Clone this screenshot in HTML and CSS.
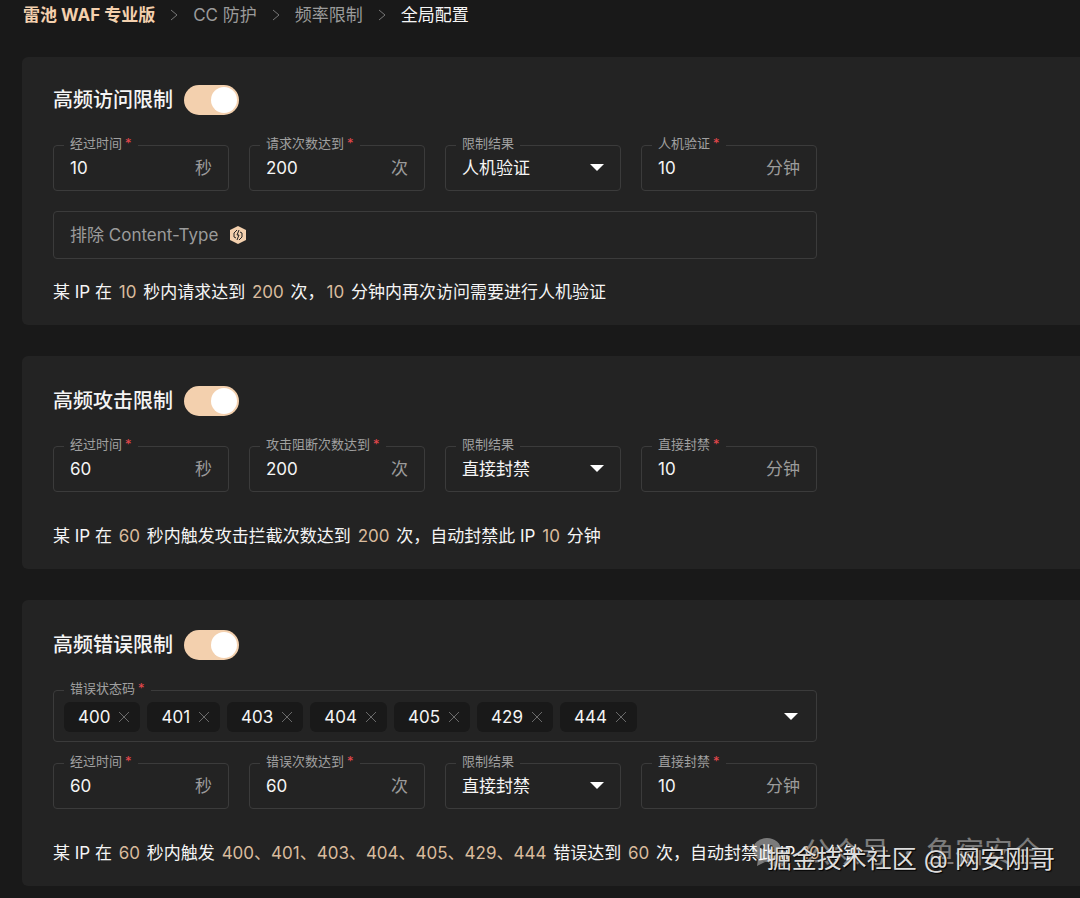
FILE: index.html
```html
<!DOCTYPE html>
<html lang="zh-CN">
<head>
    <meta charset="UTF-8">
    <meta name="viewport" content="width=device-width, initial-scale=1.0">
    <title>全局配置</title>
    <link rel="stylesheet" href="styles.css">
</head>
<body>
    <nav class="breadcrumb">
        <a href="#" class="brand">雷池 WAF 专业版</a>
        <svg class="sep" viewBox="0 0 8 12"><path d="M1 1l6 5-6 5"/></svg>
        <a href="#">CC 防护</a>
        <svg class="sep" viewBox="0 0 8 12"><path d="M1 1l6 5-6 5"/></svg>
        <a href="#">频率限制</a>
        <svg class="sep" viewBox="0 0 8 12"><path d="M1 1l6 5-6 5"/></svg>
        <a href="#" class="current">全局配置</a>
    </nav>

    <main class="cards">
        <section class="card">
            <div class="card-title">
                <h2><label for="visitOn">高频访问限制</label></h2>
                <input type="checkbox" class="switch" id="visitOn" checked>
            </div>
            <div class="fields">
                <fieldset class="field">
                    <legend><label for="visitTime">经过时间<i>*</i></label></legend>
                    <input type="text" id="visitTime" value="10">
                    <span class="unit">秒</span>
                </fieldset>
                <fieldset class="field">
                    <legend><label for="visitCount">请求次数达到<i>*</i></label></legend>
                    <input type="text" id="visitCount" value="200">
                    <span class="unit">次</span>
                </fieldset>
                <fieldset class="field">
                    <legend><label for="visitResult">限制结果</label></legend>
                    <select id="visitResult">
                        <option selected>人机验证</option>
                    </select>
                    <svg class="arrow" viewBox="0 0 14 8"><path d="M0 0h14L7 7z"/></svg>
                </fieldset>
                <fieldset class="field">
                    <legend><label for="visitBan">人机验证<i>*</i></label></legend>
                    <input type="text" id="visitBan" value="10">
                    <span class="unit">分钟</span>
                </fieldset>
                <div class="field wide plain">
                    <label for="contentType">排除 Content-Type</label>
                    <svg class="pro" viewBox="0 0 18 18"><path class="hex" d="M9 0l8 4v10l-8 4-8-4V4z"/><path class="bolt" d="M8 4L5 7v4l2 1M10 4L8 9h2l-2 5M11 6l2 1v4l-3 3"/></svg>
                    <input type="text" id="contentType">
                </div>
            </div>
            <p class="summary">某 IP 在 <b>10</b> 秒内请求达到 <b>200</b> 次，<b>10</b> 分钟内再次访问需要进行人机验证</p>
        </section>

        <section class="card">
            <div class="card-title">
                <h2><label for="attackOn">高频攻击限制</label></h2>
                <input type="checkbox" class="switch" id="attackOn" checked>
            </div>
            <div class="fields">
                <fieldset class="field">
                    <legend><label for="attackTime">经过时间<i>*</i></label></legend>
                    <input type="text" id="attackTime" value="60">
                    <span class="unit">秒</span>
                </fieldset>
                <fieldset class="field">
                    <legend><label for="attackCount">攻击阻断次数达到<i>*</i></label></legend>
                    <input type="text" id="attackCount" value="200">
                    <span class="unit">次</span>
                </fieldset>
                <fieldset class="field">
                    <legend><label for="attackResult">限制结果</label></legend>
                    <select id="attackResult">
                        <option selected>直接封禁</option>
                    </select>
                    <svg class="arrow" viewBox="0 0 14 8"><path d="M0 0h14L7 7z"/></svg>
                </fieldset>
                <fieldset class="field">
                    <legend><label for="attackBan">直接封禁<i>*</i></label></legend>
                    <input type="text" id="attackBan" value="10">
                    <span class="unit">分钟</span>
                </fieldset>
            </div>
            <p class="summary spaced">某 IP 在 <b>60</b> 秒内触发攻击拦截次数达到 <b>200</b> 次，自动封禁此 IP <b>10</b> 分钟</p>
        </section>

        <section class="card">
            <div class="card-title">
                <h2><label for="errorOn">高频错误限制</label></h2>
                <input type="checkbox" class="switch" id="errorOn" checked>
            </div>
            <div class="fields">
                <fieldset class="field wide tags">
                    <legend>错误状态码<i>*</i></legend>
                    <span class="tag">400<button type="button" aria-label="400"><svg viewBox="0 0 10 10"><path d="M0 0l10 10M10 0L0 10"/></svg></button></span>
                    <span class="tag">401<button type="button" aria-label="401"><svg viewBox="0 0 10 10"><path d="M0 0l10 10M10 0L0 10"/></svg></button></span>
                    <span class="tag">403<button type="button" aria-label="403"><svg viewBox="0 0 10 10"><path d="M0 0l10 10M10 0L0 10"/></svg></button></span>
                    <span class="tag">404<button type="button" aria-label="404"><svg viewBox="0 0 10 10"><path d="M0 0l10 10M10 0L0 10"/></svg></button></span>
                    <span class="tag">405<button type="button" aria-label="405"><svg viewBox="0 0 10 10"><path d="M0 0l10 10M10 0L0 10"/></svg></button></span>
                    <span class="tag">429<button type="button" aria-label="429"><svg viewBox="0 0 10 10"><path d="M0 0l10 10M10 0L0 10"/></svg></button></span>
                    <span class="tag">444<button type="button" aria-label="444"><svg viewBox="0 0 10 10"><path d="M0 0l10 10M10 0L0 10"/></svg></button></span>
                    <button type="button" class="open" aria-label="错误状态码"><svg class="arrow" viewBox="0 0 14 8"><path d="M0 0h14L7 7z"/></svg></button>
                </fieldset>
                <fieldset class="field">
                    <legend><label for="errorTime">经过时间<i>*</i></label></legend>
                    <input type="text" id="errorTime" value="60">
                    <span class="unit">秒</span>
                </fieldset>
                <fieldset class="field">
                    <legend><label for="errorCount">错误次数达到<i>*</i></label></legend>
                    <input type="text" id="errorCount" value="60">
                    <span class="unit">次</span>
                </fieldset>
                <fieldset class="field">
                    <legend><label for="errorResult">限制结果</label></legend>
                    <select id="errorResult">
                        <option selected>直接封禁</option>
                    </select>
                    <svg class="arrow" viewBox="0 0 14 8"><path d="M0 0h14L7 7z"/></svg>
                </fieldset>
                <fieldset class="field">
                    <legend><label for="errorBan">直接封禁<i>*</i></label></legend>
                    <input type="text" id="errorBan" value="10">
                    <span class="unit">分钟</span>
                </fieldset>
            </div>
            <p class="summary spaced">某 IP 在 <b>60</b> 秒内触发 <b>400、401、403、404、405、429、444</b> 错误达到 <b>60</b> 次，自动封禁此 IP <b>10</b> 分钟</p>
        </section>
    </main>

    <div class="mark mark-wechat">
        <svg viewBox="0 0 36 32"><ellipse cx="14" cy="13" rx="14" ry="12"/><path d="M5 22l-1 7 8-4z"/><ellipse cx="25" cy="21" rx="11" ry="9"/><circle class="eye" cx="9" cy="10" r="2"/><circle class="eye" cx="18" cy="10" r="2"/></svg>
        <span>公众号</span>
        <span>·</span>
        <span>鱼宿安全</span>
    </div>
    <div class="mark mark-site">掘金技术社区 @ 网安刚哥</div>
</body>
</html>
```
FILE: styles.css
```css
* {
    box-sizing: border-box;
}
body {
    margin: 0;
    background: #191919;
    color: #f5f5f5;
    font-family: Inter, "Noto Sans CJK SC", sans-serif;
    font-size: 17px;
    line-height: 24px;
}
a {
    color: #9b9b9b;
    text-decoration: none;
}
.breadcrumb {
    display: flex;
    align-items: center;
    gap: 15px;
    padding: 3px 23px 0;
}
.breadcrumb .brand {
    color: #f3d0ae;
    font-weight: bold;
}
.breadcrumb .current {
    color: #f5f5f5;
}
.sep {
    width: 8px;
    height: 12px;
    fill: none;
    stroke: #777;
    stroke-width: 1;
}
.cards {
    display: flex;
    flex-direction: column;
    gap: 31px;
    padding: 30px 0 12px 22px;
}
.card {
    padding: 28px 31px 21px;
    background: #232323;
    border-radius: 6px 0 0 6px;
}
.card + .card {
    padding-top: 30px;
}
.card-title {
    display: flex;
    align-items: center;
    gap: 11px;
    height: 30px;
}
h2 {
    margin: 0;
    font-size: 20px;
    font-weight: 500;
}
.switch {
    appearance: none;
    display: flex;
    justify-content: flex-end;
    width: 55px;
    height: 30px;
    margin: 0;
    padding: 2px;
    border-radius: 15px;
    background: #f3d0ae;
}
.switch::before {
    content: "";
    width: 26px;
    height: 26px;
    border-radius: 50%;
    background: #fff;
}
.switch:not(:checked) {
    justify-content: flex-start;
    background: #555;
}
.fields {
    display: grid;
    grid-template-columns: repeat(4, 1fr);
    gap: 10px 20px;
    max-width: 764px;
    margin-top: 19px;
}
.field {
    display: flex;
    align-items: center;
    min-width: 0;
    height: 57px;
    margin: 0;
    padding: 0 16px 10px 10px;
    border: 1px solid #3b3b3b;
    border-radius: 4px;
}
.field legend {
    padding: 0 6px 4px;
    color: #a0a0a0;
    font-size: 13px;
    line-height: 18px;
}
.field i {
    margin-left: 3px;
    color: #e5484d;
    font-style: normal;
}
.field input,
.field select {
    flex: 1;
    min-width: 0;
    height: 24px;
    padding: 0 0 0 6px;
    border: none;
    outline: none;
    appearance: none;
    background: transparent;
    color: #f5f5f5;
    font: inherit;
}
.unit {
    color: #9b9b9b;
}
.arrow {
    width: 14px;
    height: 8px;
    fill: #fff;
}
.wide {
    grid-column: 1 / -1;
}
.plain {
    height: 48px;
    margin-top: 10px;
    padding: 0 16px;
    color: #9b9b9b;
}
.pro {
    width: 18px;
    height: 18px;
    margin-left: 11px;
}
.hex {
    fill: #f3d0ae;
}
.bolt {
    fill: none;
    stroke: #232323;
    stroke-width: 1;
}
.tags {
    gap: 7px;
    height: 63px;
    padding-bottom: 8px;
    padding-right: 18px;
}
.tag {
    display: flex;
    align-items: center;
    gap: 9px;
    height: 30px;
    padding: 0 11px 0 14px;
    border-radius: 6px;
    background: #191919;
}
button {
    display: flex;
    padding: 0;
    border: none;
    background: none;
}
.tag svg {
    width: 10px;
    height: 10px;
    fill: none;
    stroke: #6a6a6a;
}
.open {
    margin-left: auto;
}
.summary {
    margin: 21px 0 0;
}
.summary.spaced {
    margin-top: 32px;
}
.summary b {
    margin: 0 2px;
    color: #d9bb9d;
    font-weight: normal;
}
/* watermarks over the last card */
.mark {
    position: absolute;
    white-space: nowrap;
}
.mark-wechat {
    top: 835px;
    right: 38px;
    display: flex;
    align-items: center;
    gap: 14px;
    color: #fff;
    font-size: 29px;
    line-height: 36px;
    opacity: 0.4;
}
.mark-wechat svg {
    width: 36px;
    height: 32px;
    fill: #fff;
}
.mark-wechat .eye {
    fill: #333;
}
.mark-site {
    top: 842px;
    right: 25px;
    color: #ddd;
    font-size: 25px;
    line-height: 34px;
    text-shadow: 1px 1px 1px #000;
}
```
